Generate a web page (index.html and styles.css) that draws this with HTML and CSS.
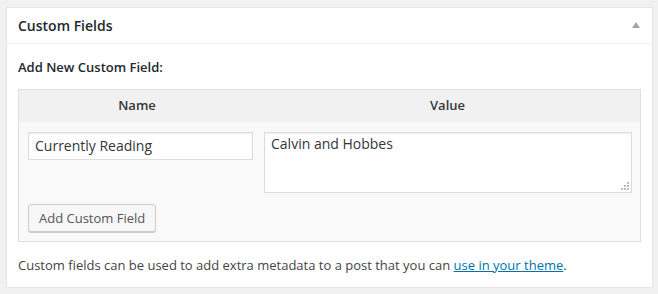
FILE: index.html
```html
<!DOCTYPE html>
<html>
<head>
<meta charset="utf-8">
<link rel="stylesheet" href="styles.css">
</head>
<body>
<div class="postbox">
  <div class="postbox-header">
    <h2 class="postbox-title">Custom Fields</h2>
    <span class="toggle-arrow"></span>
  </div>
  <div class="inside">
    <p class="add-title">Add New Custom Field:</p>
    <div class="meta-table">
      <div class="meta-head">
        <div class="col-name">Name</div>
        <div class="col-value">Value</div>
      </div>
      <div class="meta-row">
        <div class="cell-name"><input class="text-input" type="text" value="Currently Reading"></div>
        <div class="cell-value">
          <textarea class="text-area">Calvin and Hobbes</textarea>
          <svg class="grip" width="8" height="8" viewBox="0 0 8 8">
            <rect x="6" y="0" width="2" height="2" fill="#bbb"/>
            <rect x="3" y="3" width="2" height="2" fill="#bbb"/>
            <rect x="6" y="3" width="2" height="2" fill="#bbb"/>
            <rect x="0" y="6" width="2" height="2" fill="#bbb"/>
            <rect x="3" y="6" width="2" height="2" fill="#bbb"/>
            <rect x="6" y="6" width="2" height="2" fill="#bbb"/>
          </svg>
        </div>
      </div>
      <div class="meta-submit">
        <button class="button" type="button">Add Custom Field</button>
      </div>
    </div>
    <p class="note">Custom fields can be used to add extra metadata to a post that you can <a href="#" class="link">use in your theme</a>.</p>
  </div>
</div>
</body>
</html>
```

FILE: styles.css
```css
html, body {
  margin: 0;
  padding: 0;
  background: #f1f1f1;
  font-family: "Open Sans", "Liberation Sans", sans-serif;
  color: #444;
}
body {
  padding: 7px 5px 0 6px;
}
.postbox {
  width: 645px;
  height: 279px;
  background: #fff;
  border: 1px solid #e5e5e5;
  box-shadow: 0 1px 1px rgba(0,0,0,.04);
}
.postbox-header {
  height: 35px;
  border-bottom: 1px solid #eee;
  display: flex;
  align-items: center;
  justify-content: space-between;
  padding: 0 12px 0 11px;
}
.postbox-title {
  margin: 0;
  font-size: 14px;
  font-weight: 600;
  color: #23282d;
  line-height: 1.4;
}
.toggle-arrow {
  width: 0;
  height: 0;
  border-left: 4px solid transparent;
  border-right: 4px solid transparent;
  border-bottom: 6px solid #a0a5aa;
  margin-top: -1px;
}
.inside {
  padding: 0 11px 0 11px;
}
.add-title {
  margin: 14px 0 0 0;
  font-size: 13px;
  font-weight: 600;
  color: #23282d;
  line-height: 18px;
}
.meta-table {
  margin-top: 13px;
  border: 1px solid #dfdfdf;
  background: #f9f9f9;
  width: 621px;
  height: 151px;
}
.meta-head {
  display: grid;
  grid-template-columns: 236px 1fr;
  background: #f1f1f1;
  height: 32px;
  line-height: 30px;
  font-size: 13px;
  font-weight: 600;
  color: #32373c;
}
.col-name, .col-value {
  text-align: center;
}
.meta-row {
  display: flex;
  gap: 11px;
  padding: 10px 8px 0 9px;
  align-items: flex-start;
}
.cell-value {
  position: relative;
}
.grip {
  position: absolute;
  right: 3px;
  bottom: 3px;
  display: block;
}
.text-input {
  box-sizing: border-box;
  width: 225px;
  height: 28px;
  border: 1px solid #ddd;
  box-shadow: inset 0 1px 2px rgba(0,0,0,.07);
  background: #fff;
  font-family: "Open Sans", "Liberation Sans", sans-serif;
  font-size: 14px;
  color: #32373c;
  padding: 0 6px 2px 6px;
  margin: 0;
  outline: none;
}
.text-area {
  box-sizing: border-box;
  width: 368px;
  height: 61px;
  border: 1px solid #ddd;
  box-shadow: inset 0 1px 2px rgba(0,0,0,.07);
  background: #fff;
  font-family: "Open Sans", "Liberation Sans", sans-serif;
  font-size: 14px;
  color: #32373c;
  padding: 1px 6px;
  margin: 0;
  resize: none;
  display: block;
  line-height: 1.4;
  outline: none;
}
.meta-submit {
  padding: 11px 9px 0 9px;
}
.button {
  height: 28px;
  box-sizing: border-box;
  padding: 0 10px;
  border: 1px solid #ccc;
  border-radius: 3px;
  background: #f7f7f7;
  box-shadow: 0 1px 0 #ccc;
  font-family: "Open Sans", "Liberation Sans", sans-serif;
  font-size: 13px;
  color: #555;
  line-height: 26px;
  margin: 0;
}
.note {
  margin: 14px 0 0 0;
  font-size: 13px;
  line-height: 18px;
  color: #444;
}
.link {
  color: #0073aa;
  text-decoration: underline;
}
```
